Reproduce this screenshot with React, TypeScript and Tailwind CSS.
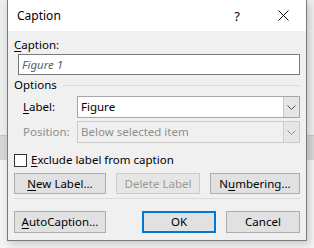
import React from "react";

const font = { fontFamily: '"Noto Sans", "Segoe UI", sans-serif' };

function Chevron({ color = "#606060" }: { color?: string }) {
  return (
    <svg width="9" height="5" viewBox="0 0 9 5" fill="none">
      <path d="M0.5 0.5 L4.5 4.5 L8.5 0.5" stroke={color} strokeWidth="1" />
    </svg>
  );
}

function Select({ value, disabled }: { value: string; disabled?: boolean }) {
  return (
    <div
      className={
        "flex h-[22px] flex-1 border " +
        (disabled ? "border-[#cccccc] bg-[#f0f0f0] text-[#8d8d8d]" : "border-[#a6a6a6] bg-white text-black")
      }
    >
      <div className="flex flex-1 items-center pl-[3px]">{value}</div>
      <div
        className={
          "flex w-[16px] items-center justify-center border-l " +
          (disabled ? "border-[#cccccc] bg-[#e6e6e6]" : "border-[#c8c8c8] bg-[#e6e6e6]")
        }
      >
        <Chevron color={disabled ? "#8a8a8a" : "#505050"} />
      </div>
    </div>
  );
}

function Btn({
  children,
  className = "",
  disabled,
}: {
  children: React.ReactNode;
  className?: string;
  disabled?: boolean;
}) {
  return (
    <div
      className={
        "flex items-center justify-center border " +
        (disabled ? "border-[#cccccc] bg-[#e6e6e6] text-[#9a9a9a] " : "border-[#adadad] bg-[#e1e1e1] text-black ") +
        className
      }
    >
      {children}
    </div>
  );
}

export default function App() {
  return (
    <div className="relative h-[248px] w-[314px] overflow-hidden bg-[#f2f2f2] text-[11.5px] leading-[16px]" style={font}>
      {/* word window behind the dialog */}
      <div className="flex h-full flex-col">
        <div className="h-[135px] bg-[#ededed]" />
        <div className="h-[25px] border-t border-[#c4c4c4] bg-[#d6d6d6]" />
        <div className="flex-1 bg-[#f3f3f3]" />
      </div>

      <div className="absolute left-[7px] top-0 flex h-[241px] w-[300px] flex-col border border-t-0 border-[#7a7a7a] bg-[#f0f0f0] shadow-[2px_3px_8px_rgba(0,0,0,0.18)]">
        <div className="flex h-[31px] items-center bg-white">
          <div className="flex-1 pl-[9px] text-[12px]">Caption</div>
          <div className="flex h-full w-[46px] items-center justify-center text-[13px]">?</div>
          <div className="flex h-full w-[46px] items-center justify-center">
            <svg width="11" height="11" viewBox="0 0 11 11">
              <path d="M0.5 0.5 L10.5 10.5 M10.5 0.5 L0.5 10.5" stroke="#111" strokeWidth="1" />
            </svg>
          </div>
        </div>

        <div className="flex flex-1 flex-col px-[6px]">
          <div className="mt-[6px]">
            <span className="underline underline-offset-2">C</span>aption:
          </div>
          <div className="ml-[4px] mt-[1px] flex h-[21px] items-center border border-[#7a7a7a] bg-white pl-[3px] italic text-[#5a6470]">
            Figure 1
          </div>

          <div className="mt-[2px] flex items-center gap-[6px]">
            <span>Options</span>
            <div className="h-px flex-1 bg-[#dcdcdc]" />
          </div>

          <div className="mt-[3px] flex items-center">
            <div className="w-[63px] pl-[9px]">
              <span className="underline underline-offset-2">L</span>abel:
            </div>
            <Select value="Figure" />
          </div>
          <div className="mt-[3px] flex items-center text-[#8d8d8d]">
            <div className="w-[63px] pl-[9px]">Position:</div>
            <Select value="Below selected item" disabled />
          </div>

          <div className="mt-[9px] flex items-center gap-[4px]">
            <div className="h-[13px] w-[13px] border border-[#333] bg-white" />
            <span>
              <span className="underline underline-offset-2">E</span>xclude label from caption
            </span>
          </div>

          <div className="mt-[5px] flex gap-[10px]">
            <Btn className="h-[21px] w-[92px]">
              <span>
                <span className="underline underline-offset-2">N</span>ew Label...
              </span>
            </Btn>
            <Btn className="h-[21px] w-[84px]" disabled>
              Delete Label
            </Btn>
            <Btn className="h-[21px] flex-1">
              <span>
                N<span className="underline underline-offset-2">u</span>mbering...
              </span>
            </Btn>
          </div>

          <div className="mt-[4px] h-px bg-[#dcdcdc]" />

          <div className="mt-[12px] flex">
            <Btn className="h-[22px] w-[92px]">
              <span>
                <span className="underline underline-offset-2">A</span>utoCaption...
              </span>
            </Btn>
            <div className="flex-1" />
            <div className="flex h-[22px] w-[74px] items-center justify-center border-2 border-[#0078d7] bg-[#e1e1e1]">OK</div>
            <Btn className="ml-[10px] h-[22px] w-[74px]">Cancel</Btn>
          </div>
        </div>
      </div>
    </div>
  );
}
